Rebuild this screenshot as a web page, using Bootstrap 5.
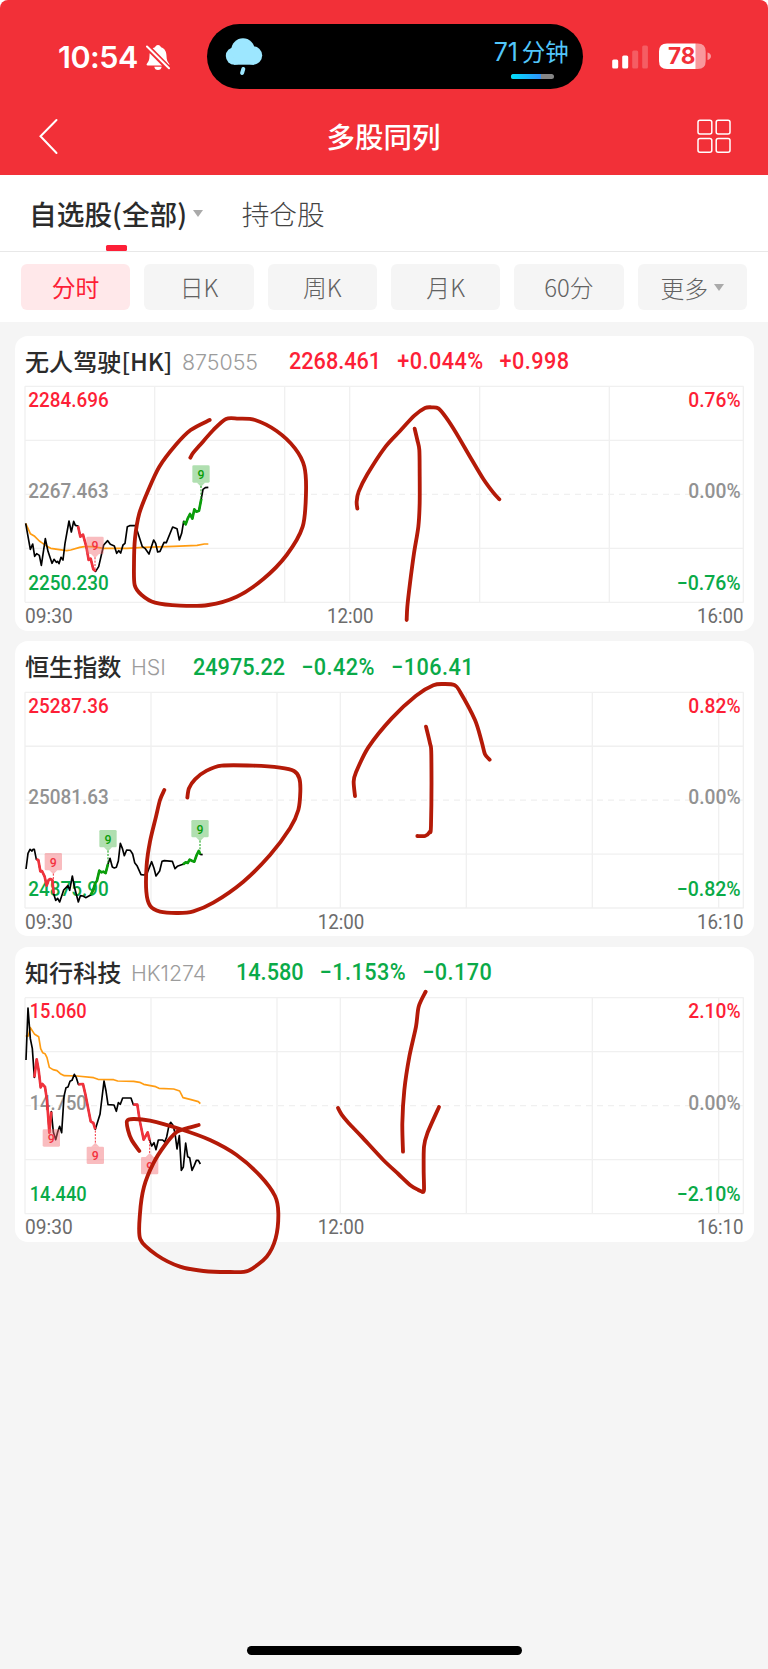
<!DOCTYPE html>
<html lang="zh-CN">
<head>
<meta charset="utf-8">
<meta name="viewport" content="width=device-width, initial-scale=1">
<title>多股同列</title>
<link href="https://cdn.jsdelivr.net/npm/bootstrap@5.3.0/dist/css/bootstrap.min.css" rel="stylesheet">
<style>
body{font-family:"Noto Sans CJK SC",sans-serif;background:#fff;color:#2b2b2b;margin:0}
.screen{width:768px;height:1669px;background:#f5f5f5;overflow:hidden;border-radius:8px 8px 0 0}
.topbar{background:#f23038;height:175.3px}
.status{height:112px;padding:24px 58px 0}
.clock{font:600 30.5px/66px Inter,sans-serif;width:80px;letter-spacing:-.5px}
.bell{margin:20px 0 0 8px}
.island{margin-left:37px;width:376px;height:64.5px;border-radius:33px;background:#000;padding:0 14px 0 18px}
.island-time{color:#52c7fb;font-size:23.5px;line-height:30px;margin-top:12px;white-space:nowrap}
.island-time b{font:400 25px/30px Inter,sans-serif;letter-spacing:-.2px;margin-right:4px}
.meter{width:42.5px;height:5.5px;border-radius:3px;background:#858585;margin:6.5px 15px 0 0}
.meter-on{height:100%;border-radius:3px 0 0 3px;background:linear-gradient(90deg,#00e1fb,#2f92fb)}
.sysicons{margin-left:28px;padding-top:18.5px;box-sizing:content-box}
.titlebar{height:50px}
.titlebar h1{font-size:28.5px;font-weight:500;line-height:48px;height:50px;color:#fff}
.tabs{height:76.7px;border-bottom:1px solid #e8e8e8;padding-left:29px}
.tab-on{font-size:27.7px;font-weight:500;line-height:77px;white-space:nowrap}
.tab-off{font-size:27.7px;font-weight:300;line-height:77px;color:#444;margin-left:38.5px}
.marker{width:21px;height:5.5px;border-radius:1.5px;background:#fd1f37;left:77px;bottom:1.5px}
.arrow{border:5px solid transparent;border-top:7.5px solid #aaa;border-bottom:0;margin-left:6px}
.periods{height:70px;padding:12.5px 21px 0;gap:14.1px}
.pill{flex:1 1 0;height:45.5px;border-radius:6px;background:#f5f5f5;color:#626262;font-size:23.8px;font-weight:300;line-height:45px}
.pill.on{background:#ffe8ea;color:#fd1f37;font-weight:400}
.stocks{padding:14px 14.5px 0;gap:10.4px}
.stock{background:#fff;border-radius:13px;height:295px}
.stock-head{height:44px;padding:3px 0 0 10.5px;line-height:43.5px;white-space:nowrap}
.stock-name{font-size:24.1px;font-weight:500}
.stock-code{font:300 21.4px/47px Inter,sans-serif;color:#9c9c9c;margin-left:9.5px}
.quote{font:500 23.8px/45px Roboto,sans-serif;gap:17.6px;transform:scaleX(.91);transform-origin:left;top:3.5px}
.signed{letter-spacing:.5px}
.up{color:#fd1f37}.down{color:#0aaa48}
.chart{width:739px;height:251px}
.ink{left:0;top:0;pointer-events:none}
.homebar{left:247px;top:1645.5px;width:274.5px;height:9px;border-radius:4.5px;background:#000}
</style>
</head>
<body>
<div class="screen position-relative">
  <header class="topbar">
    <div class="status d-flex align-items-start text-white">
      <div class="clock">10:54</div>
      <svg class="bell flex-shrink-0" width="24" height="28" viewBox="0 0 24 28">
        <path fill="#fff" d="M12 1c1.600 0 2.600 1 3 2.300 3.700 1.200 5.400 4.300 5.500 8.500.1 4 .9 6 2.500 7.700.8.9.5 2-.7 2H1.700c-1.200 0-1.500-1.100-.7-2C2.600 17.800 3.400 15.800 3.500 11.800 3.600 7.600 5.300 4.500 9 3.300 9.400 2 10.400 1 12 1zM8.300 22.800h7.400c-.2 2-1.700 3.300-3.700 3.300s-3.500-1.300-3.700-3.300z"/>
        <path d="M1 2.500L22.800 24.500" stroke="#f23038" stroke-width="5.600"/>
        <path d="M1 2.500L23 24.300" stroke="#fff" stroke-width="2" stroke-linecap="round"/>
      </svg>
      <div class="island d-flex justify-content-between flex-shrink-0">
        <svg width="38" height="64" viewBox="0 0 38 64"><g fill="#9de7ff"><circle cx="9.500" cy="32" r="8.700"/><circle cx="28" cy="31.500" r="9.200"/><circle cx="18" cy="26" r="11.700"/><rect x="9" y="28" width="20" height="12.700"/></g><path d="M18.300 45l-1.200 4" stroke="#9de7ff" stroke-width="4" stroke-linecap="round"/></svg>
        <div class="d-flex flex-column align-items-end">
          <div class="island-time"><b>71</b>分钟</div>
          <div class="meter"><div class="meter-on" style="width:70%"></div></div>
        </div>
      </div>
      <svg class="sysicons flex-shrink-0" width="100" height="30" viewBox="0 0 100 30">
        <g fill="#fff"><rect x="1.200" y="17" width="6" height="9" rx="1.500"/><rect x="11.200" y="13" width="6" height="13" rx="1.500"/><rect x="21.200" y="8" width="6" height="18" rx="1.500" opacity=".22"/><rect x="31.200" y="3" width="5.700" height="23" rx="1.500" opacity=".22"/></g>
        <path fill="#fff" d="M56 1h28.700v25.500H56q-8 0-8-8v-9.500q0-8 8-8z"/>
        <path fill="#fff" opacity=".5" d="M84.700 1h2q8 0 8 8v9.500q0 8-8 8h-2zM96.500 10q3.500 1 3.500 3.700t-3.500 3.800z"/>
        <text x="57" y="21.700" font-family="Inter" font-weight="700" font-size="22.500" textLength="27.500" lengthAdjust="spacingAndGlyphs" fill="#f23038">78</text>
      </svg>
    </div>
    <div class="titlebar d-flex align-items-center justify-content-between">
      <svg width="60" height="50" viewBox="0 0 60 50"><path d="M56.500 8L40.500 24.300 56.500 41" fill="none" stroke="#fff" stroke-width="2" stroke-linecap="round"/></svg>
      <h1 class="m-0 ps-4">多股同列</h1>
      <svg width="85" height="50" viewBox="0 0 85 50"><g fill="none" stroke="#fff" stroke-width="1.500"><rect x="15" y="8.200" width="13.800" height="13.800" rx="2"/><rect x="33.200" y="8.200" width="13.800" height="13.800" rx="2"/><rect x="15" y="26.500" width="13.800" height="13.800" rx="2"/><rect x="33.200" y="26.500" width="13.800" height="13.800" rx="2"/></g></svg>
    </div>
  </header>
  <nav class="tabs bg-white d-flex align-items-start">
    <div class="position-relative d-flex align-items-center"><span class="tab-on">自选股(全部)</span><i class="arrow"></i><i class="marker position-absolute"></i></div>
    <span class="tab-off">持仓股</span>
  </nav>
  <div class="periods bg-white d-flex text-center">
    <div class="pill on">分时</div><div class="pill">日K</div><div class="pill">周K</div><div class="pill">月K</div><div class="pill">60分</div>
    <div class="pill d-flex align-items-center justify-content-center">更多<i class="arrow"></i></div>
  </div>
  <main class="stocks d-flex flex-column">
    <section class="stock">
      <div class="stock-head d-flex position-relative"><span class="stock-name">无人驾驶[HK]</span><span class="stock-code">875055</span>
        <div class="quote up d-flex position-absolute" style="left:274.2px"><span>2268.461</span><span class="signed">+0.044%</span><span class="signed">+0.998</span></div></div>
      <svg class="chart d-block" id="c1" viewBox="44 150 2217 753"></svg>
    </section>
    <section class="stock">
      <div class="stock-head d-flex position-relative"><span class="stock-name">恒生指数</span><span class="stock-code">HSI</span>
        <div class="quote down d-flex position-absolute" style="left:178px"><span>24975.22</span><span class="signed">−0.42%</span><span class="signed">−106.41</span></div></div>
      <svg class="chart d-block" id="c2" viewBox="44 150 2217 753"></svg>
    </section>
    <section class="stock">
      <div class="stock-head d-flex position-relative"><span class="stock-name">知行科技</span><span class="stock-code">HK1274</span>
        <div class="quote down d-flex position-absolute" style="left:221.8px"><span>14.580</span><span class="signed">−1.153%</span><span class="signed">−0.170</span></div></div>
      <svg class="chart d-block" id="c3" viewBox="44 152 2217 753"></svg>
    </section>
  </main>
  <svg class="ink position-absolute" id="ink" width="768" height="1669" viewBox="0 0 768 1669" fill="none" stroke="#b41a08" stroke-width="11.500" stroke-linecap="round" stroke-linejoin="round"></svg>
  <div class="homebar position-absolute"></div>
</div>
<script src="https://cdn.jsdelivr.net/npm/bootstrap@5.3.0/dist/js/bootstrap.bundle.min.js"></script>
<script>
// Chart space uses three units per CSS pixel.
const RED='#fd1f37', GREEN='#0aaa48';
const label=(x,y,t,c,w,end)=>`<text x="${x}" y="${y}" font-family="Roboto" font-weight="${w.b||500}" font-size="61" fill="${c}" textLength="${w.w||w}" lengthAdjust="spacingAndGlyphs" text-anchor="${end||'start'}">${t}</text>`;
const line=(p,c,w)=>`<polyline points="${p}" fill="none" stroke="${c}" stroke-width="${w}" stroke-linejoin="round"/>`;
function tag(m){
  const [x,y,kind,tip]=m, c=kind=='r'?'#f4333f':'#0a9e0a', bg=kind=='r'?'#f26a70':'#4fb74f';
  const up=tip<y;
  const tri=up?`M${x-12} ${y}l12 -12 12 12z`:`M${x-12} ${y+52}l12 12 12 -12z`;
  return `<g fill="${bg}" fill-opacity=".45"><rect x="${x-26}" y="${y}" width="52" height="52" rx="4"/>${tip?`<path d="${tri}"/>`:''}</g>`+
   (tip?`<path d="M${x} ${up?y-12:y+62}V${tip}" stroke="${c}" stroke-width="3" stroke-dasharray="6 4"/>`:'')+
   `<text x="${x}" y="${y+41}" text-anchor="middle" font-family="Roboto" font-weight="500" font-size="41" textLength="21" lengthAdjust="spacingAndGlyphs" fill="${c}">9</text>`;
}
function chart(id,d){
  const [t,b]=d.y, s=(b-t)/4; let h='<g stroke="#f0f0f0" stroke-width="4" fill="none">';
  [0,1,3,4].forEach(i=>h+=`<path d="M74 ${t+s*i}H2230"/>`);
  h+=`<path d="M74 ${t+s*2}H2230" stroke-dasharray="18 15"/>`;
  d.v.forEach(x=>h+=`<path d="M${x} ${t}V${b}"/>`); h+='</g>';
  const lx=d.lx||84, lw=d.lw||241;
  [[d.l[0],t+61,RED],[d.l[1],t+336,'#929292'],[d.l[2],t+610,GREEN]].forEach(a=>h+=label(lx,a[1],a[0],a[2],lw));
  [[d.r[0],t+61,RED,157],[d.r[1],t+336,'#929292',157],[d.r[2],t+610,GREEN,192]].forEach(a=>h+=label(2221,a[1],a[0],a[2],a[3],'end'));
  const ty=b+62;
  h+=label(74,ty,'09:30','#6c6c6c',{w:143,b:400})+label(d.noon,ty,'12:00','#6c6c6c',{w:140,b:400},'middle')+label(2230,ty,d.end,'#6c6c6c',{w:140,b:400},'end');
  if(d.avg) h+=line(d.avg,'#ff9c12',5);
  h+=line(d.p,'#000',5);
  (d.red||[]).forEach(p=>h+=line(p,'#f0323c',8));
  (d.green||[]).forEach(p=>h+=line(p,'#0a9e0a',8));
  d.tags.forEach(m=>h+=tag(m));
  document.getElementById(id).innerHTML=h;
}
chart('c1',{y:[169,817],v:[74,463,853,1048,1438,1827,2229],l:['2284.696','2267.463','2250.230'],r:['0.76%','0.00%','−0.76%'],noon:1050,end:'16:00',
 avg:'76,580 90,611 103,619 117,633 124,638 137,647 151,655 177,659 199,662 211,660 238,652 252,650 275,650 310,655 380,655 430,652 520,649 590,646 612,642 624,642',
 p:'76,580 90,658 97,642 103,679 109,671 117,676 123,706 135,626 143,664 155,700 161,688 168,697 172,694 176,701 182,682 188,690 194,640 206,573 213,606 220,574 225,586 233,588 240,620 248,614 258,650 265,690 271,686 279,718 286,724 295,710 310,645 322,632 330,643 342,648 349,670 355,662 361,669 368,645 374,640 381,590 388,587 406,587 413,610 426,650 434,655 446,672 460,630 466,640 472,666 479,664 491,637 498,638 517,591 530,596 537,630 544,610 550,574 556,583 562,566 569,552 576,566 582,538 588,545 596,542 603,506 608,478 615,473 624,472',
 red:['233,588 240,620 248,614 258,650 265,690 271,686 279,718 286,724'],green:['550,574 556,583 562,566 569,552 576,566 582,538 588,545 596,542 603,506'],
 tags:[[284,620,'r',718],[602,406,'g',506]]});
chart('c2',{y:[172,819],v:[74,452,830,1020,1398,1776,2155,2229],l:['25287.36','25081.63','24875.90'],r:['0.82%','0.00%','−0.82%'],noon:1022,end:'16:10',
 p:'77,702 83,655 89,643 95,648 98,643 102,643 108,673 114,675 120,709 125,708 133,725 139,752 145,735 150,732 156,735 160,776 166,796 172,790 178,801 190,765 197,758 203,752 208,766 216,723 222,755 234,801 240,782 248,783 256,788 271,780 278,766 285,744 290,737 297,707 303,712 309,710 316,714 323,687 329,670 336,696 342,699 348,697 354,678 360,625 366,640 372,662 379,645 390,646 397,657 403,683 410,692 422,719 431,720 440,715 454,680 461,700 467,723 478,708 485,679 492,677 516,679 524,701 531,694 548,688 556,682 562,684 568,674 576,678 582,680 589,660 595,648 600,658 607,659',
 red:['108,673 114,675 120,709 125,708 133,725 139,752 145,735 150,732 156,735 160,776'],green:['271,780 278,766 285,744 290,737 297,707 303,712 309,710 316,714 323,687','548,688 556,682 562,684 568,674 576,678 582,680 589,660 595,648 600,658'],
 tags:[[159,654,'r',770],[323,585,'g',690],[599,555,'g',650]]});
chart('c3',{y:[172,820],lx:88,lw:171,v:[74,452,830,1020,1398,1776,2155,2229],l:['15.060','14.750','14.440'],r:['2.10%','0.00%','−2.10%'],noon:1022,end:'16:10',
 avg:'76,287 84,287 90,262 103,282 115,289 121,325 127,337 134,340 140,352 147,381 158,388 170,391 180,400 192,406 230,407 280,412 293,417 340,418 352,422 400,423 418,426 430,432 466,439 476,444 520,446 538,452 548,472 572,478 594,484 600,490',
 p:'77,359 83,203 90,295 96,325 102,411 109,357 115,390 121,441 126,431 134,440 140,480 147,577 153,514 159,575 166,598 172,575 178,558 184,577 191,468 197,442 203,440 209,423 215,420 222,402 228,412 234,432 248,431 256,466 271,543 279,548 285,567 292,544 299,522 311,422 317,452 323,493 341,494 348,513 354,487 360,492 367,473 392,473 399,493 411,493 418,540 430,598 442,576 448,600 454,617 461,607 467,628 474,599 487,599 493,605 499,590 506,555 511,546 518,555 524,578 530,626 537,586 543,690 549,680 556,608 562,649 568,652 575,690 582,675 588,660 594,660 600,671',
 red:['102,411 109,357 115,390 121,441 126,431 134,440 140,480 147,577 153,514','234,432 248,431 256,466 271,543 279,548 285,567','399,493 411,493 418,540 430,598 442,576 448,600'],
 tags:[[153,567,'r'],[285,619,'r',567],[448,650,'r',600]]});

// Hand-drawn marks: [origin x, origin y, points], smoothed through their points.
const marks=[
 [0,330,'629,270 572,300 527,345 478,410 445,480 418,550 405,625 402,700 404,765 425,795 465,818 540,827 625,825 710,800 790,747 860,675 908,590 918,490 913,410 885,355 830,303 765,270 715,266 678,267 640,300 600,345 580,368 571,383'],
 [320,330,'112,536 110,515 116,485 142,433 195,352 240,303 283,257 315,234 335,232 355,235 378,262 408,308 450,380 490,447 520,488 538,508'],
 [320,330,'284,296 292,330 298,360 299,430 299,520 295,590 282,670 270,760 262,830 260,870'],
 [0,635,'493,465 480,495 468,545 450,620 440,690 439,770 450,812 480,830 535,834 580,829 640,803 730,740 810,660 870,580 895,525 901,470 898,430 882,408 840,398 760,392 665,392 620,407 585,433 567,460 562,488'],
 [320,635,'105,483 101,440 108,412 145,337 215,250 288,182 340,151 370,147 403,150 420,170 465,255 485,320 495,358 509,374'],
 [320,635,'318,275 330,325 334,360 333,570 328,592 315,603 292,603'],
 [0,940,'418,633 395,600 384,570 381,543 400,537 450,542 540,567 630,600 710,645 780,707 825,768 835,820 827,895 800,950 745,992 690,996 610,993 540,980 470,945 421,898 420,820 432,740 460,670 495,615 530,576 560,565 596,555'],
 [320,940,'317,155 296,200 288,260 268,350 253,450 247,550 249,635'],
 [320,940,'54,504 65,524 85,548 125,590 190,660 235,702 270,735 295,750 307,755'],
 [320,940,'307,755 312,750 311,690 312,620 322,580 357,501']];
document.getElementById('ink').innerHTML=marks.map(([ox,oy,s])=>{
  const p=s.split(' ').map(q=>q.split(',').map(Number)); let d=`M${p[0]}`;
  for(let i=0;i<p.length-1;i++){
    const a=p[i-1]||p[i],b=p[i],c=p[i+1],e=p[i+2]||c;
    d+=`C${b[0]+(c[0]-a[0])/7} ${b[1]+(c[1]-a[1])/7} ${c[0]-(e[0]-b[0])/7} ${c[1]-(e[1]-b[1])/7} ${c[0]} ${c[1]}`;
  }
  return `<path transform="translate(${ox} ${oy}) scale(.33333)" d="${d}"/>`;
}).join('');
</script>
</body>
</html>
